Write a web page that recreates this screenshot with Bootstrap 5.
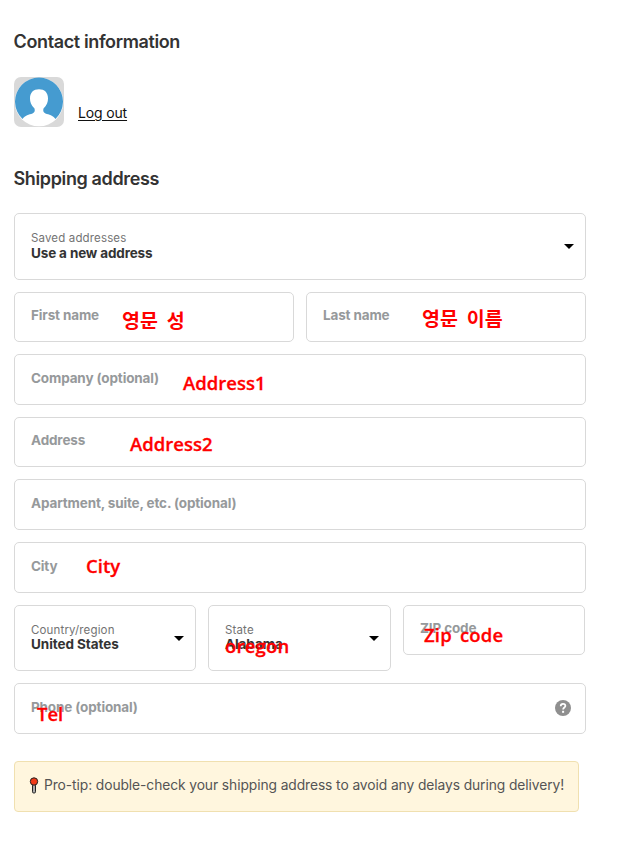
<!DOCTYPE html>
<html lang="en">
<head>
<meta charset="utf-8">
<meta name="viewport" content="width=device-width, initial-scale=1">
<title>Shipping address</title>
<link href="https://cdn.jsdelivr.net/npm/bootstrap@5.3.0/dist/css/bootstrap.min.css" rel="stylesheet">
<style>
body{font-family:Inter,"Liberation Sans",sans-serif;color:#333;background:#fff}
.checkout{width:572px;margin-left:14px;padding-top:31px}
.section-title{font-size:18px;line-height:22px;font-weight:600;letter-spacing:-.37px;color:#333;margin:0 0 0 -.5px}
.account{margin-top:24px;margin-bottom:41px}
.avatar{width:50px;height:50px;border-radius:7px;display:block}
.logout{font-size:14px;line-height:18px;letter-spacing:-.15px;color:#111;margin-left:14px;margin-bottom:5px;text-underline-offset:2px}
.stack{gap:12px}
.address-form{margin-top:23px}
.field{position:relative;border:1px solid #d9d9d9;border-radius:5px;height:50px;padding:0 16px;background:#fff}
.h51{height:51px}
.pick{height:66px}
.pick-tall{height:67px}
.w182{width:182px}
.w183{width:183px}
.hint{font-size:13.5px;line-height:18px;font-weight:700;color:#96999b;padding-top:13px;letter-spacing:-.14px;white-space:nowrap}
.h51 .hint{padding-top:14px}
.tag{font-size:11.5px;line-height:14px;color:#737373;padding-top:17px;letter-spacing:.15px;white-space:nowrap}
.val{font-size:13.5px;line-height:16px;font-weight:700;color:#333;letter-spacing:-.14px;white-space:nowrap}
.pick .val{line-height:15px;letter-spacing:-.07px}
.caret{width:10px;height:5px;flex:none;margin-right:11px}
.help{width:16px;height:16px;margin-right:-2px;margin-top:-2px}
.note{position:absolute;color:#f00;font:600 18.5px/26px "Open Sans","Noto Sans CJK KR",sans-serif;-webkit-text-stroke:.3px #f00;white-space:nowrap;z-index:1}
.ko{font-family:"Noto Sans CJK KR",sans-serif;font-weight:700;font-size:19.5px;-webkit-text-stroke:0}
.n-first{left:107px;top:14px}
.n-last{left:115px;top:12px}
.n-addr1{left:168px;top:15px}
.n-addr2{left:115px;top:13px}
.n-city{left:71px;top:10px}
.n-state{left:16px;top:27px;letter-spacing:.2px}
.n-zip{left:20px;top:16px;letter-spacing:.2px;word-spacing:3px}
.n-tel{left:22px;top:17px}
.tip{width:565px;height:51px;border:1px solid #f0e0b0;border-radius:4px;background:#fff6de;color:#545454;font-size:13.8px;letter-spacing:-.08px;padding:0 14px 3px;margin-top:27px;white-space:nowrap}
.pin{width:10px;height:17px;flex:none;margin-right:5px}
</style>
<script src="https://cdn.jsdelivr.net/npm/bootstrap@5.3.0/dist/js/bootstrap.bundle.min.js"></script>
</head>
<body>
<main class="checkout">
  <h2 class="section-title">Contact information</h2>
  <div class="account d-flex align-items-end">
    <svg class="avatar" viewBox="0 0 50 50"><rect width="50" height="50" fill="#d9d9d9"/><circle cx="25" cy="25" r="24.3" fill="#fff"/><path d="M8.500 42A24 24 0 1 1 41.500 42C39 38.500 35 37.500 31.500 36.500C29 35.500 29 33.500 29.500 31.500C33 28.500 34 24.500 34 21.500C34 15.500 30.500 12.300 25 12.300S16 15.500 16 21.500C16 24.500 17 28.500 20.500 31.500C21 33.500 21 35.500 18.500 36.500C15 37.500 11 38.500 8.500 42Z" fill="#459bd0"/></svg>
    <a href="#" class="logout">Log out</a>
  </div>
  <h2 class="section-title">Shipping address</h2>
  <form class="address-form stack d-flex flex-column">
    <div class="field pick-tall d-flex justify-content-between align-items-center pe-0">
      <div class="align-self-start"><div class="tag">Saved addresses</div><div class="val">Use a new address</div></div>
      <svg class="caret" viewBox="0 0 10 5"><path d="M0 0H10L5 5Z"/></svg>
    </div>
    <div class="stack d-flex">
      <div class="field w-50"><div class="hint">First name</div><span class="note ko n-first">영문&nbsp; 성</span></div>
      <div class="field w-50"><div class="hint">Last name</div><span class="note ko n-last">영문&nbsp; 이름</span></div>
    </div>
    <div class="field h51"><div class="hint">Company (optional)</div><span class="note n-addr1">Address1</span></div>
    <div class="field"><div class="hint">Address</div><span class="note n-addr2">Address2</span></div>
    <div class="field h51"><div class="hint">Apartment, suite, etc. (optional)</div></div>
    <div class="field h51"><div class="hint">City</div><span class="note n-city">City</span></div>
    <div class="stack d-flex align-items-start">
      <div class="field pick w182 d-flex justify-content-between align-items-center pe-0">
        <div class="align-self-start"><div class="tag">Country/region</div><div class="val">United States</div></div>
        <svg class="caret" viewBox="0 0 10 5"><path d="M0 0H10L5 5Z"/></svg>
      </div>
      <div class="field pick w183 d-flex justify-content-between align-items-center pe-0">
        <div class="align-self-start"><div class="tag">State</div><div class="val">Alabama</div></div>
        <svg class="caret" viewBox="0 0 10 5"><path d="M0 0H10L5 5Z"/></svg>
        <span class="note n-state">oregon</span>
      </div>
      <div class="field w182"><div class="hint">ZIP code</div><span class="note n-zip">Zip code</span></div>
    </div>
    <div class="field h51 d-flex justify-content-between align-items-center">
      <div class="hint align-self-start">Phone (optional)</div><span class="note n-tel">Tel</span>
      <svg class="help" viewBox="0 0 16 16"><circle cx="8" cy="8" r="8" fill="#8f8f8f"/><path d="M5.700 6.300C5.700 4.600 6.700 3.900 8 3.900S10.400 4.700 10.400 6C10.400 7.500 8.100 7.600 8.100 9.500" fill="none" stroke="#fff" stroke-width="1.700"/><rect x="7.100" y="10.800" width="2" height="2" fill="#fff"/></svg>
    </div>
  </form>
  <div class="tip d-flex align-items-center">
    <svg class="pin" viewBox="0 0 10 17"><rect x="3.500" y="7" width="3" height="9" rx="1.200" fill="#aaa" stroke="#222"/><circle cx="5" cy="4.500" r="3.700" fill="#f03a17" stroke="#222"/></svg>
    <span>Pro-tip: double-check your shipping address to avoid any delays during delivery!</span>
  </div>
</main>
</body>
</html>
